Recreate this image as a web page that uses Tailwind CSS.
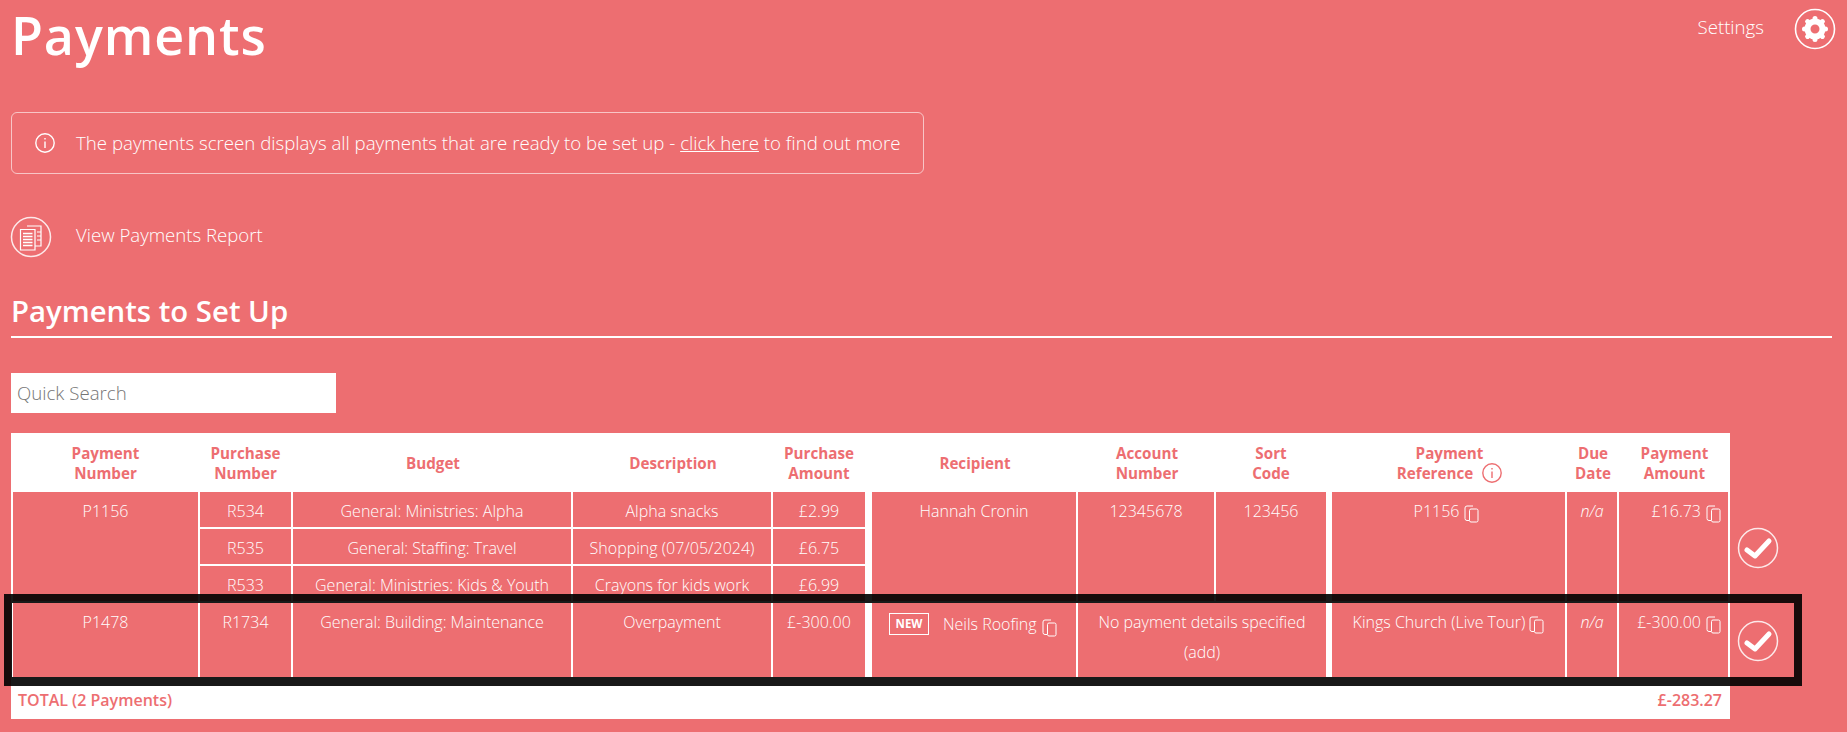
<!DOCTYPE html>
<html lang="en">
<head>
    <meta charset="UTF-8">
    <title>Payments</title>
    <script src="https://cdn.jsdelivr.net/npm/@tailwindcss/browser@4"></script>
</head>
<body class="relative h-[732px] overflow-hidden bg-[#ed6e71] font-['Open_Sans',sans-serif] text-white">

    <div class="pl-[11px] pr-[15px]">
        <!-- Header -->
        <header class="flex h-[112px] items-start justify-between">
            <h1 class="mt-[1px] text-[52px] leading-[68px] font-semibold tracking-[0.9px]">Payments</h1>
            <div class="mt-[8px] flex items-center">
                <a class="mb-[4px] text-[18.67px] font-light">Settings</a>
                <svg class="mr-[-4px] ml-[30px] h-[42px] w-[42px]" viewBox="0 0 42 42" fill="none" stroke="white">
                    <circle cx="21" cy="21" r="19.5" stroke-width="1.6"/>
                    <circle cx="21" cy="21" r="7.5" stroke-width="6"/>
                    <g stroke-width="5" stroke-linecap="round">
                        <path d="M21 10.5V11M21 31V31.5M10.5 21H11M31 21H31.5M13.6 13.6L14 14M28 28L28.4 28.4M13.6 28.4L14 28M28 14L28.4 13.6"/>
                    </g>
                </svg>
            </div>
        </header>

        <!-- Info box -->
        <div class="flex h-[62px] w-[913px] items-center rounded-md border border-white/60">
            <svg class="ml-[23px] h-[20px] w-[20px]" viewBox="0 0 20 20" fill="none" stroke="white" stroke-width="1.4">
                <circle cx="10" cy="10" r="9.2"/>
                <path d="M10 8.5V15M10 5V6.5"/>
            </svg>
            <p class="ml-[21px] text-[18.67px] font-light">The payments screen displays all payments that are ready to be set up - <a class="underline">click here</a> to find out more</p>
        </div>

        <!-- Report link -->
        <div class="mt-[42px] flex h-[42px] items-center">
            <svg class="ml-[-1px] h-[42px] w-[42px]" viewBox="0 0 42 42" fill="none" stroke="white">
                <circle cx="21" cy="21" r="19.5" stroke-width="1.5" stroke-opacity="0.85"/>
                <path d="M17 10H31V30H25" stroke-width="1.2"/>
                <path d="M10.5 13.5H25V34H10.5Z" stroke-width="1.2"/>
                <path d="M13 17.5H22.5M13 20.5H22.5M13 23.5H22.5M13 26.5H22.5M13 29.5H22.5" stroke-width="1.5"/>
                <path d="M27 16H31M27 20H31M27 24H31" stroke-width="1"/>
            </svg>
            <a class="mb-[5px] ml-[24px] text-[18.6px] font-light">View Payments Report</a>
        </div>

        <!-- Section title -->
        <h2 class="flex h-[80px] items-end border-b-2 border-white pb-[7px] text-[29.33px] leading-[36px] font-semibold">Payments to Set Up</h2>

        <input class="mt-[35px] block h-[40px] w-[325px] bg-white px-[6px] pb-[2px] text-[18.67px] font-light text-[#757575] placeholder:text-[#757575]" placeholder="Quick Search">

        <!-- Payments table -->
        <table class="mt-[20px] table-fixed border-separate border-spacing-0 text-center text-[16px] leading-[30px] font-light">
            <colgroup>
                <col class="w-[189px]"><col class="w-[93px]"><col class="w-[280px]"><col class="w-[200px]"><col class="w-[99px]"><col class="w-[206px]"><col class="w-[138px]"><col class="w-[116px]"><col class="w-[235px]"><col class="w-[52px]"><col class="w-[111px]"><col class="w-[63px]">
            </colgroup>
            <thead class="text-[15.2px] leading-[20px] font-semibold text-[#ed6e71]">
                <tr class="h-[59px] bg-white">
                    <th>Payment<br>Number</th>
                    <th class="pr-[2px]">Purchase<br>Number</th>
                    <th>Budget</th>
                    <th>Description</th>
                    <th class="pr-[7px]">Purchase<br>Amount</th>
                    <th>Recipient</th>
                    <th>Account<br>Number</th>
                    <th class="pr-[6px]">Sort<br>Code</th>
                    <th>
                        Payment<br>
                        <span class="inline-flex items-center gap-[9px]">Reference
                            <svg class="h-[20px] w-[20px]" viewBox="0 0 20 20" fill="none" stroke="#ed6e71" stroke-width="1.4">
                                <circle cx="10" cy="10" r="9.2"/>
                                <path d="M10 8.5V15M10 5V6.5"/>
                            </svg>
                        </span>
                    </th>
                    <th>Due<br>Date</th>
                    <th>Payment<br>Amount</th>
                    <th class="bg-[#ed6e71]"></th>
                </tr>
            </thead>
            <tbody>
                <tr class="h-[37px]">
                    <td rowspan="3" class="border-x-2 border-b-2 border-white pt-[4px] align-top">P1156</td>
                    <td class="border-r-2 border-b-2 border-white pt-[4px] align-top">R534</td>
                    <td class="border-r-2 border-b-2 border-white pt-[4px] align-top">General: Ministries: Alpha</td>
                    <td class="border-r-2 border-b-2 border-white pt-[4px] align-top">Alpha snacks</td>
                    <td class="border-r-[7px] border-b-2 border-white pt-[4px] align-top">£2.99</td>
                    <td rowspan="3" class="border-r-2 border-b-2 border-white pt-[4px] align-top">Hannah Cronin</td>
                    <td rowspan="3" class="border-r-2 border-b-2 border-white pt-[4px] align-top">12345678</td>
                    <td rowspan="3" class="border-r-[6px] border-b-2 border-white pt-[4px] align-top">123456</td>
                    <td rowspan="3" class="border-r-2 border-b-2 border-white pt-[4px] pr-[4px] align-top">
                        <span class="inline-flex items-start">P1156
                            <svg class="mt-[9px] ml-[5px] h-[18px] w-[15px]" viewBox="0 0 15 18" fill="none" stroke="white" stroke-width="1"><path d="M5 15.5H3Q1 15.5 1 13.5V3Q1 1 3 1H9"/><rect x="5.5" y="4" width="8.5" height="13" rx="1.5"/></svg>
                        </span>
                    </td>
                    <td rowspan="3" class="border-r-2 border-b-2 border-white pt-[4px] align-top italic">n/a</td>
                    <td rowspan="3" class="border-r-2 border-b-2 border-white pt-[4px] pr-[7px] text-right align-top">
                        <span class="inline-flex items-start">£16.73
                            <svg class="mt-[9px] ml-[5px] h-[18px] w-[15px]" viewBox="0 0 15 18" fill="none" stroke="white" stroke-width="1"><path d="M5 15.5H3Q1 15.5 1 13.5V3Q1 1 3 1H9"/><rect x="5.5" y="4" width="8.5" height="13" rx="1.5"/></svg>
                        </span>
                    </td>
                    <td rowspan="3" class="pr-[7px] align-middle">
                        <svg class="mx-auto block h-[42px] w-[42px]" viewBox="0 0 42 42" fill="none" stroke="white">
                            <circle cx="21" cy="21" r="19.5" stroke-width="1.5" stroke-opacity="0.85"/>
                            <path d="M10 23L18 29L32 14" stroke-width="5" stroke-linecap="round" stroke-linejoin="round"/>
                        </svg>
                    </td>
                </tr>
                <tr class="h-[37px]">
                    <td class="border-r-2 border-b-2 border-white pt-[4px] align-top">R535</td>
                    <td class="border-r-2 border-b-2 border-white pt-[4px] align-top">General: Staffing: Travel</td>
                    <td class="border-r-2 border-b-2 border-white pt-[4px] align-top">Shopping (07/05/2024)</td>
                    <td class="border-r-[7px] border-b-2 border-white pt-[4px] align-top">£6.75</td>
                </tr>
                <tr class="h-[37px]">
                    <td class="border-r-2 border-b-2 border-white pt-[4px] align-top">R533</td>
                    <td class="border-r-2 border-b-2 border-white pt-[4px] align-top">General: Ministries: Kids &amp; Youth</td>
                    <td class="border-r-2 border-b-2 border-white pt-[4px] align-top">Crayons for kids work</td>
                    <td class="border-r-[7px] border-b-2 border-white pt-[4px] align-top">£6.99</td>
                </tr>
                <tr class="h-[76px]">
                    <td class="border-x-2 border-b-2 border-white pt-[4px] align-top">P1478</td>
                    <td class="border-r-2 border-b-2 border-white pt-[4px] align-top">R1734</td>
                    <td class="border-r-2 border-b-2 border-white pt-[4px] align-top">General: Building: Maintenance</td>
                    <td class="border-r-2 border-b-2 border-white pt-[4px] align-top">Overpayment</td>
                    <td class="border-r-[7px] border-b-2 border-white pt-[4px] align-top">£-300.00</td>
                    <td class="border-r-2 border-b-2 border-white pt-[4px] pl-[17px] text-left align-top">
                        <span class="inline-flex items-start">
                            <span class="mt-[4px] mr-[14px] flex h-[22px] w-[40px] items-center justify-center border border-white text-[11.5px] leading-none font-bold">NEW</span>Neils Roofing
                            <svg class="mt-[10px] ml-[5px] h-[18px] w-[15px]" viewBox="0 0 15 18" fill="none" stroke="white" stroke-width="1"><path d="M5 15.5H3Q1 15.5 1 13.5V3Q1 1 3 1H9"/><rect x="5.5" y="4" width="8.5" height="13" rx="1.5"/></svg>
                        </span>
                    </td>
                    <td colspan="2" class="border-r-[6px] border-b-2 border-white pt-[4px] align-top">No payment details specified<br>(add)</td>
                    <td class="border-r-2 border-b-2 border-white pt-[4px] align-top">
                        <span class="inline-flex items-start">Kings Church (Live Tour)
                            <svg class="mt-[9px] ml-[4px] h-[18px] w-[15px]" viewBox="0 0 15 18" fill="none" stroke="white" stroke-width="1"><path d="M5 15.5H3Q1 15.5 1 13.5V3Q1 1 3 1H9"/><rect x="5.5" y="4" width="8.5" height="13" rx="1.5"/></svg>
                        </span>
                    </td>
                    <td class="border-r-2 border-b-2 border-white pt-[4px] align-top italic">n/a</td>
                    <td class="border-r-2 border-b-2 border-white pt-[4px] pr-[7px] text-right align-top">
                        <span class="inline-flex items-start">£-300.00
                            <svg class="mt-[9px] ml-[5px] h-[18px] w-[15px]" viewBox="0 0 15 18" fill="none" stroke="white" stroke-width="1"><path d="M5 15.5H3Q1 15.5 1 13.5V3Q1 1 3 1H9"/><rect x="5.5" y="4" width="8.5" height="13" rx="1.5"/></svg>
                        </span>
                    </td>
                    <td class="pr-[7px] align-middle">
                        <svg class="mx-auto block h-[42px] w-[42px]" viewBox="0 0 42 42" fill="none" stroke="white">
                            <circle cx="21" cy="21" r="19.5" stroke-width="1.5" stroke-opacity="0.85"/>
                            <path d="M10 23L18 29L32 14" stroke-width="5" stroke-linecap="round" stroke-linejoin="round"/>
                        </svg>
                    </td>
                </tr>
            </tbody>
            <tfoot class="font-semibold text-[#ed6e71]">
                <tr class="h-[40px]">
                    <td colspan="5" class="bg-white pt-[2px] pl-[7px] text-left">TOTAL (2 Payments)</td>
                    <td colspan="6" class="bg-white pt-[2px] pr-[8px] text-right">£-283.27</td>
                    <td></td>
                </tr>
            </tfoot>
        </table>
    </div>

    <!-- Highlight drawn over the second payment -->
    <div class="absolute top-[594px] left-[4px] h-[92px] w-[1798px] border-x-[8px] border-y-[9px] border-black/90"></div>

</body>
</html>
